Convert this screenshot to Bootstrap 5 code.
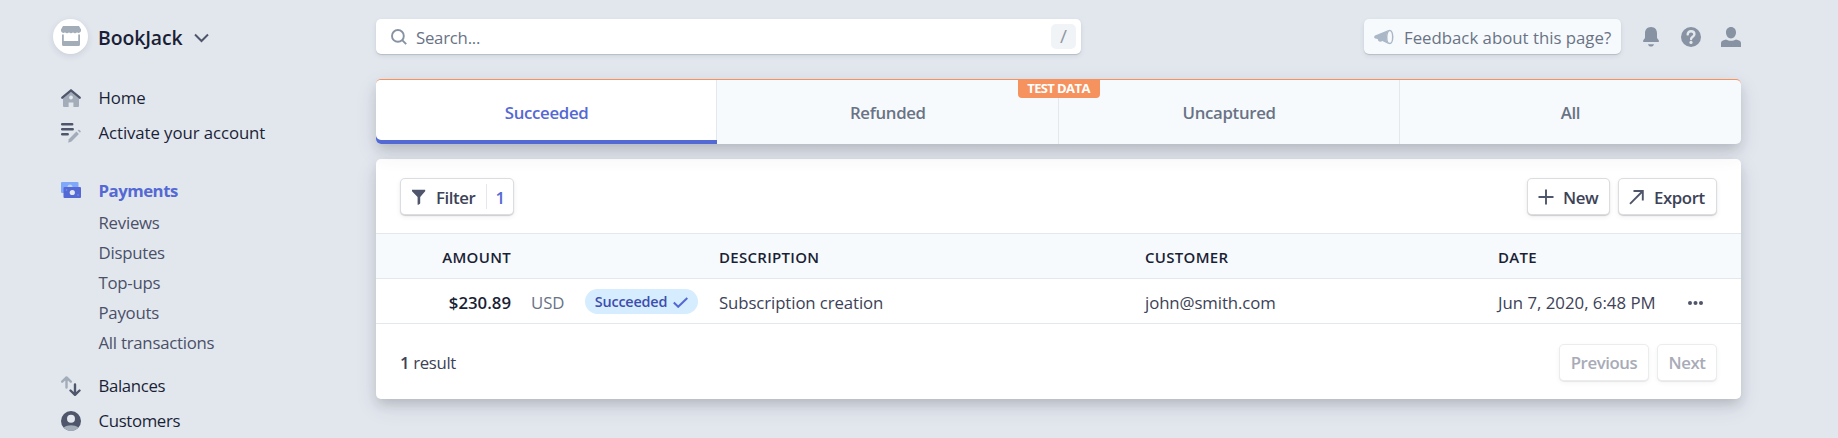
<!DOCTYPE html>
<html lang="en">
<head>
<meta charset="utf-8">
<meta name="viewport" content="width=device-width, initial-scale=1">
<title>Payments</title>
<link href="https://cdn.jsdelivr.net/npm/bootstrap@5.3.0/dist/css/bootstrap.min.css" rel="stylesheet">
<style>
  :root { --ink: #1a1f36; --ink-2: #3c4257; --muted: #697386; --accent: #5469d4; --line: #e3e8ee; --pale: #f7fafc; --orange: #f5925e; }
  body { font-family: "Open Sans", "Noto Sans", sans-serif; font-size: 16.8px; font-weight: 400; line-height: 1.3; color: var(--ink-2); background: #e2e7ee; height: 438px; overflow: hidden; }
  svg { display: block; flex: none; }
  a { color: inherit; text-decoration: none; }
  .semi { font-weight: 600; }

  .sidebar { width: 376px; padding: 18px 0 0 53px; }
  .brand { height: 36px; color: var(--ink); font-size: 19.4px; font-weight: 600; letter-spacing: -.1px; margin-bottom: 26px; }
  .brand-mark { width: 35px; height: 35px; background: #fff; box-shadow: 0 2px 6px rgba(60,66,87,.14); margin-right: 10px; }
  .brand-name { padding-top: 4px; }
  .brand-caret { margin: 3px 0 0 11px; }
  .side-item { height: 35px; padding-left: 8px; color: var(--ink); letter-spacing: -.08px; }
  .side-item svg { margin-right: 17.5px; }
  .side-item.current { color: var(--accent); font-weight: 700; letter-spacing: -.5px; margin-top: 23px; }
  .side-item.spaced { margin-top: 10px; }
  .side-item.tight { letter-spacing: -.35px; }
  .side-item span { padding-top: 1px; }
  .side-sub { height: 30px; padding: 0 0 0 45.5px; color: #4a5068; letter-spacing: -.25px; }

  .page-col { width: 1365px; padding-top: 19px; }
  .topbar { height: 35px; margin-bottom: 25px; color: var(--muted); }
  .search-box { width: 705px; height: 35px; padding: 0 5px 0 15px; background: #fff; border-radius: 5px; box-shadow: 0 1px 1px rgba(0,0,0,.14), 0 2px 5px rgba(60,66,87,.1); }
  .search-hint { padding: 2px 0 0 9px; letter-spacing: -.25px; }
  .slash-key { width: 25px; height: 25px; border-radius: 5px; background: #f1f4f7; color: #9097a4; font-size: 19px; }
  .feedback { width: 257px; height: 35px; padding-left: 10px; background: var(--pale); border-radius: 5px; box-shadow: 0 1px 1px rgba(0,0,0,.14), 0 2px 5px rgba(60,66,87,.1); white-space: nowrap; }
  .feedback-label { padding-top: 2px; margin-left: 10px; }
  .top-icon { margin-left: 20px; }
  .top-icon.wide { margin-left: 22px; }

  .raised { border-radius: 5px; box-shadow: 0 6px 12px -1px rgba(0,0,0,.14), 0 8px 22px rgba(60,66,87,.11); }
  .tabs { height: 65px; background: var(--pale); border-top: 1px solid var(--orange); margin-bottom: 15px; }
  .tab-link { flex: 1 1 0; min-width: 0; color: var(--muted); font-weight: 600; letter-spacing: -.32px; box-shadow: inset -1px 0 0 var(--line); padding: 5px 0 4px; }
  .tab-link:nth-child(4) { box-shadow: none; }
  .tab-link.current { background: #fff; color: var(--accent); border-radius: 5px 0 0 5px; box-shadow: inset 0 -4px 0 var(--accent), inset -1px 0 0 var(--line); }
  .test-flag { top: -1px; left: 50%; transform: translateX(-50%); width: 82px; height: 19px; background: var(--orange); color: #fff; font-size: 13px; font-weight: 700; letter-spacing: -.6px; border-radius: 0 0 4px 4px; white-space: nowrap; }

  .panel { height: 240px; background: #fff; }
  .panel-head { height: 74px; padding: 1px 24px 0; }
  .panel-foot { height: 75px; padding: 1px 24px 0; }
  .tool-btn { height: 37px; padding: 0 10px; border-radius: 5px; background: #fff; color: var(--ink-2); font-weight: 600; letter-spacing: -.4px; box-shadow: 0 0 0 1px rgba(60,66,87,.18) inset, 0 1px 1px rgba(0,0,0,.16), 0 2px 5px rgba(60,66,87,.08); white-space: nowrap; }
  .tool-btn.off { padding-top: 1px; color: #a8abb7; box-shadow: 0 0 0 1px rgba(60,66,87,.1) inset, 0 1px 1px rgba(0,0,0,.07), 0 2px 5px rgba(60,66,87,.05); }
  .tool-btn svg { margin-top: 1px; }
  .btn-label { margin-left: 9px; padding-top: 2px; }
  .filter-count { border-left: 1px solid var(--line); height: 25px; color: var(--accent); padding: 2px 0 0 8px; margin-left: 11px; }

  .pay-table { table-layout: fixed; width: 1365px; border-collapse: separate; border-spacing: 0; }
  .pay-table th, .pay-table td { height: 45px; padding: 3px 0 0; border-bottom: 1px solid var(--line); vertical-align: middle; white-space: nowrap; letter-spacing: -.1px; }
  .pay-table th { background: var(--pale); color: var(--ink); font-size: 15px; font-weight: 600; letter-spacing: .3px; padding-top: 3px; border-top: 1px solid var(--line); height: 46px; }
  .pay-table .amount { color: var(--ink); font-weight: 600; letter-spacing: 0; }
  .pay-table .currency { padding-left: 20px; color: var(--muted); }
  .pay-table .when { letter-spacing: 0; }
  .status { width: 113px; height: 25px; margin-top: -3px; padding-top: 2px; border-radius: 13px; background: #d6ecff; color: #3d4eac; font-size: 14.4px; font-weight: 600; letter-spacing: -.2px; }
  .status svg { margin-left: 6px; }
  .result-count { padding-top: 1px; letter-spacing: -.35px; }
</style>
</head>
<body class="d-flex">

<aside class="sidebar flex-shrink-0">
  <div class="brand d-flex align-items-center">
    <span class="brand-mark rounded-circle d-flex align-items-center justify-content-center">
      <svg width="20" height="20" viewBox="0 0 20 20" fill="#a3acb9"><path d="M2 0h16l2 3.600v1.400a2.500 2.500 0 0 1-4 1.300 2.500 2.500 0 0 1-4 0 2.500 2.500 0 0 1-4 0 2.500 2.500 0 0 1-4 0A2.500 2.500 0 0 1 0 5V3.600z"/><path d="M1 8.500h1.800V15h14.400V8.500H19V18.500a1.500 1.500 0 0 1-1.500 1.500h-15A1.500 1.500 0 0 1 1 18.500z"/></svg>
    </span>
    <span class="brand-name">BookJack</span>
    <svg class="brand-caret" width="15" height="10" viewBox="0 0 15 10" fill="none" stroke="#4f566b" stroke-width="2"><path d="M1 1.500l6.500 6.500L14 1.500"/></svg>
  </div>

  <nav>
    <a href="#" class="side-item d-flex align-items-center">
      <svg width="20" height="20" viewBox="0 0 20 20"><path d="M10 3.500l8 7V18a1 1 0 0 1-1 1h-4.600v-4.500h-4.800V19H3a1 1 0 0 1-1-1v-7.500z" fill="#a3acb9"/><circle cx="10" cy="9.500" r="1.900" fill="#e3e8ee"/><path d="M1.300 9.700L10 2.300l8.700 7.400" fill="none" stroke="#4f566b" stroke-width="2.300" stroke-linejoin="round" stroke-linecap="round"/></svg>
      <span>Home</span>
    </a>
    <a href="#" class="side-item d-flex align-items-center">
      <svg width="20" height="22" viewBox="0 0 20 22"><path d="M1.200 2.200h10M1.200 7.200h10.500M1.200 12.200h5.500" stroke="#4f566b" stroke-width="2.500" stroke-linecap="round"/><path d="M15.400 9.600l2.500 2.500-7.400 7.400-3.300 1.300.6-3.500z" fill="#a3acb9"/><path d="M16.600 8.500l1-.7c.8-.5 2.500 1.200 2.100 2l-.7 1z" fill="#a3acb9"/></svg>
      <span>Activate your account</span>
    </a>

    <a href="#" class="side-item current d-flex align-items-center">
      <svg width="20" height="20" viewBox="0 0 20 20"><rect x="0" y="1" width="17.500" height="11" rx="1" fill="#7fa8fa"/><circle cx="9" cy="6" r="2.500" fill="#bfd3f5"/><rect x="2.500" y="6" width="17.500" height="11" rx="1" fill="#5469d4"/><circle cx="11.300" cy="11.500" r="2.600" fill="#e3e8ee"/><circle cx="5.500" cy="9" r=".8" fill="#7f92e6"/><circle cx="17" cy="14" r=".8" fill="#7f92e6"/></svg>
      <span>Payments</span>
    </a>
    <a href="#" class="side-sub d-flex align-items-center">Reviews</a>
    <a href="#" class="side-sub d-flex align-items-center">Disputes</a>
    <a href="#" class="side-sub d-flex align-items-center">Top-ups</a>
    <a href="#" class="side-sub d-flex align-items-center">Payouts</a>
    <a href="#" class="side-sub d-flex align-items-center">All transactions</a>

    <a href="#" class="side-item spaced tight d-flex align-items-center">
      <svg width="20" height="20" viewBox="0 0 20 20" fill="none" stroke-width="2.400" stroke-linecap="round" stroke-linejoin="round"><path d="M5.500 11.500V1.500M1.200 5.700l4.300-4.300 4.300 4.300" stroke="#a3acb9"/><path d="M14 8.500v10M9.500 14.500l4.500 4.300 4.500-4.300" stroke="#4f566b"/></svg>
      <span>Balances</span>
    </a>
    <a href="#" class="side-item tight d-flex align-items-center">
      <svg width="20" height="20" viewBox="0 0 20 20"><circle cx="10" cy="10" r="10" fill="#4f566b"/><path d="M2.500 16.600c4.500-3.200 10.500-3.200 15 0a10 10 0 0 1-15 0z" fill="#a3acb9"/><circle cx="10" cy="7.800" r="4" fill="#e3e8ee"/></svg>
      <span>Customers</span>
    </a>
  </nav>
</aside>

<main class="page-col flex-shrink-0">
  <header class="topbar d-flex align-items-center">
    <div class="search-box d-flex align-items-center">
      <svg width="16" height="16" viewBox="0 0 16 16" fill="none" stroke="#8792a2" stroke-width="1.900"><circle cx="6.900" cy="6.900" r="5.900"/><path d="M11.200 11.200l4 4"/></svg>
      <span class="flex-grow-1 search-hint">Search...</span>
      <span class="slash-key d-flex align-items-center justify-content-center">/</span>
    </div>
    <a href="#" class="feedback d-flex align-items-center ms-auto">
      <svg width="20" height="16" viewBox="0 0 20 16"><path d="M14.500 1L1 6.500C-.2 7.300 0 9.200 1.200 9.500L3.700 10c.2 2.400 2.500 3.600 4.600 2L14.500 15c-3-3.500-3-10 0-14z" fill="#a9b7c6"/><ellipse cx="15.700" cy="8" rx="3" ry="6.600" fill="none" stroke="#a9b7c6" stroke-width="1.500"/></svg>
      <span class="feedback-label">Feedback about this page?</span>
    </a>
    <svg class="top-icon wide" width="16" height="20" viewBox="0 0 16 20" fill="#8792a2"><path d="M8 0c3.900 0 6 2.800 6 6.200v4.300c0 1.300 2 2.300 2 3.700 0 .5-.3.800-.8.800H.8c-.5 0-.8-.3-.8-.8 0-1.400 2-2.400 2-3.700V6.200C2 2.800 4.100 0 8 0zM5 17.200h6c-.4 1.500-1.500 2.300-3 2.300s-2.600-.8-3-2.300z"/></svg>
    <svg class="top-icon wide" width="20" height="20" viewBox="0 0 20 20"><circle cx="10" cy="10" r="10" fill="#8792a2"/><path d="M6.700 7.400C6.700 5.400 8 4.300 10 4.300s3.400 1.200 3.400 3c0 2.500-3.300 2.400-3.300 4.700" fill="none" stroke="#e3e8ee" stroke-width="2.400" stroke-linecap="round"/><circle cx="10" cy="15.400" r="1.600" fill="#e3e8ee"/></svg>
    <svg class="top-icon" width="20" height="20" viewBox="0 0 20 20" fill="#8792a2"><path d="M10 0c3 0 5 2.300 5 5.500S12.700 11.500 10 11.500 5 8.700 5 5.500 7 0 10 0zM0 20v-3.800c0-1.300.7-2.300 1.900-2.800l3.100-1c2.800 1.700 7.200 1.700 10 0l3.100 1c1.200.5 1.900 1.500 1.900 2.800V20z"/></svg>
  </header>

  <nav class="tabs raised d-flex position-relative">
    <a href="#" class="tab-link current d-flex align-items-center justify-content-center">Succeeded</a>
    <a href="#" class="tab-link d-flex align-items-center justify-content-center">Refunded</a>
    <a href="#" class="tab-link d-flex align-items-center justify-content-center">Uncaptured</a>
    <a href="#" class="tab-link d-flex align-items-center justify-content-center">All</a>
    <span class="test-flag position-absolute d-flex align-items-center justify-content-center">TEST DATA</span>
  </nav>

  <section class="panel raised">
    <div class="panel-head d-flex align-items-center">
      <button type="button" class="tool-btn border-0 d-flex align-items-center" style="width:114px">
        <svg width="17" height="16" viewBox="0 0 17 16"><path d="M2 .8h13.200v1.400L10.200 8v6.300c0 .8-1.700 1.500-2.600 1.500V8L2 2.200z" fill="#4f566b"/></svg>
        <span class="btn-label">Filter</span>
        <span class="filter-count d-flex align-items-center">1</span>
      </button>
      <button type="button" class="tool-btn border-0 d-flex align-items-center ms-auto" style="width:83px">
        <svg width="17" height="16" viewBox="0 0 17 16" fill="none" stroke="#4f566b" stroke-width="1.900"><path d="M1.500 8h15M9 .5v15"/></svg>
        <span class="btn-label">New</span>
      </button>
      <button type="button" class="tool-btn border-0 d-flex align-items-center ms-2" style="width:99px">
        <svg width="17" height="16" viewBox="0 0 17 16" fill="none" stroke="#4f566b" stroke-width="1.900"><path d="M2 14.800L14.800 2M5.500 2h9.300v9.500"/></svg>
        <span class="btn-label">Export</span>
      </button>
    </div>

    <table class="pay-table">
      <colgroup><col style="width:135px"><col style="width:74px"><col style="width:134px"><col style="width:426px"><col style="width:353px"><col style="width:188px"><col></colgroup>
      <thead>
        <tr><th class="text-end">AMOUNT</th><th></th><th></th><th>DESCRIPTION</th><th>CUSTOMER</th><th>DATE</th><th></th></tr>
      </thead>
      <tbody>
        <tr>
          <td class="text-end amount">$230.89</td>
          <td class="currency">USD</td>
          <td><span class="status d-flex align-items-center justify-content-center">Succeeded<svg width="15" height="11" viewBox="0 0 15 11" fill="none" stroke="#5469d4" stroke-width="2"><path d="M.8 5.500l4.400 4.300L14.300 1"/></svg></span></td>
          <td>Subscription creation</td>
          <td>john@smith.com</td>
          <td class="when">Jun 7, 2020, 6:48 PM</td>
          <td><svg width="20" height="6" viewBox="0 0 20 6" fill="#4f566b"><circle cx="4" cy="3" r="2"/><circle cx="9.500" cy="3" r="2"/><circle cx="15" cy="3" r="2"/></svg></td>
        </tr>
      </tbody>
    </table>

    <div class="panel-foot d-flex align-items-center">
      <span class="result-count"><span class="semi">1</span> result</span>
      <button type="button" class="tool-btn off border-0 ms-auto" style="width:90px" disabled>Previous</button>
      <button type="button" class="tool-btn off border-0 ms-2" style="width:60px" disabled>Next</button>
    </div>
  </section>
</main>

<script src="https://cdn.jsdelivr.net/npm/bootstrap@5.3.0/dist/js/bootstrap.bundle.min.js"></script>
</body>
</html>
